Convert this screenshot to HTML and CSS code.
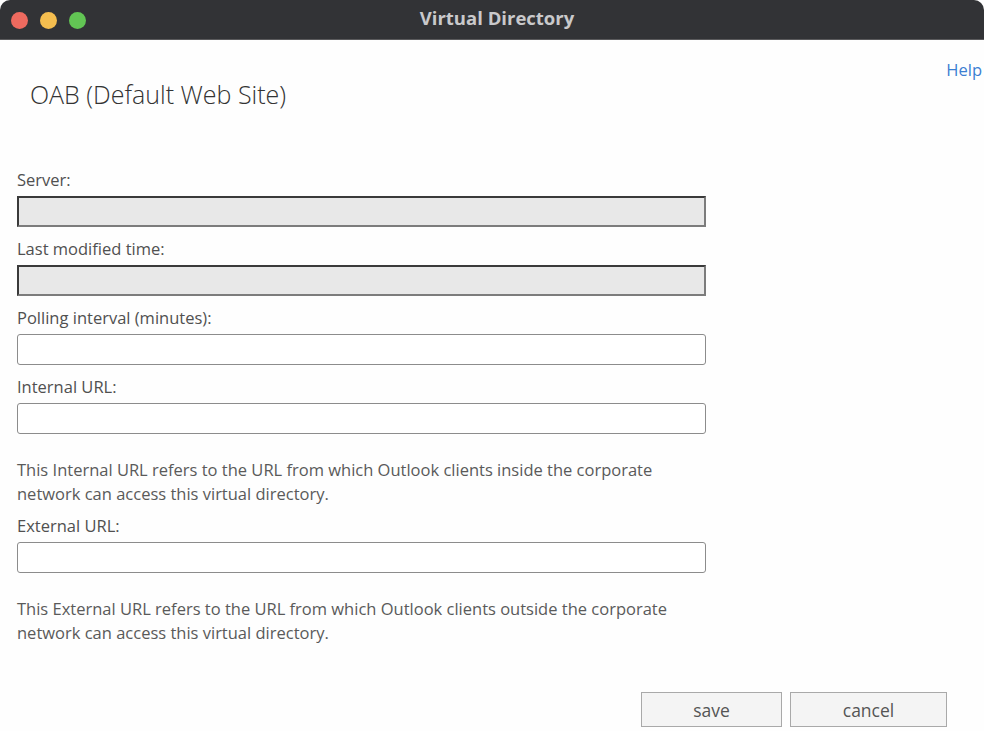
FILE: index.html
```html
<!DOCTYPE html>
<html>
<head>
<meta charset="utf-8">
<link rel="stylesheet" href="styles.css">
</head>
<body>
<div class="window">
  <div class="titlebar">
    <div class="lights">
      <span class="light red"></span>
      <span class="light yellow"></span>
      <span class="light green"></span>
    </div>
    <div class="title">Virtual Directory</div>
  </div>
  <div class="content">
    <div class="header">
      <h1 class="heading">OAB (Default Web Site)</h1>
      <a class="help">Help</a>
    </div>
    <div class="form">
      <div class="field">
        <label class="label">Server:</label>
        <div class="input readonly"></div>
      </div>
      <div class="field">
        <label class="label">Last modified time:</label>
        <div class="input readonly"></div>
      </div>
      <div class="field">
        <label class="label">Polling interval (minutes):</label>
        <div class="input"></div>
      </div>
      <div class="field">
        <label class="label">Internal URL:</label>
        <div class="input"></div>
      </div>
      <p class="note">This Internal URL refers to the URL from which Outlook clients inside the corporate network can access this virtual directory.</p>
      <div class="field">
        <label class="label">External URL:</label>
        <div class="input"></div>
      </div>
      <p class="note">This External URL refers to the URL from which Outlook clients outside the corporate network can access this virtual directory.</p>
    </div>
    <div class="actions">
      <button class="btn save">save</button>
      <button class="btn cancel">cancel</button>
    </div>
  </div>
</div>
</body>
</html>
```
FILE: styles.css
```css
html, body {
  margin: 0;
  padding: 0;
  background: #ffffff;
}
body {
  font-family: "Open Sans", "Noto Sans", sans-serif;
  color: #505050;
}
.window {
  width: 984px;
  height: 731px;
  display: flex;
  flex-direction: column;
  background: #fefefe;
  overflow: hidden;
}
.titlebar {
  height: 40px;
  flex: 0 0 40px;
  box-sizing: border-box;
  background: #323336;
  border-bottom: 1px solid #5a5a5c;
  border-radius: 10px 10px 0 0;
  display: flex;
  align-items: center;
  position: relative;
}
.lights {
  display: flex;
  gap: 12px;
  padding-left: 11px;
  margin-top: 1px;
}
.light {
  width: 17px;
  height: 17px;
  border-radius: 50%;
  display: block;
}
.red { background: #ee6a5f; }
.yellow { background: #f5be4f; }
.green { background: #62c554; }
.title {
  position: absolute;
  left: 10px;
  right: 0;
  top: 6px;
  text-align: center;
  font-family: "Open Sans", sans-serif;
  font-weight: 700;
  font-size: 18.5px;
  line-height: 24px;
  color: #c9c9cb;
  pointer-events: none;
}
.content {
  flex: 1;
  padding: 0 37px 0 17px;
  display: flex;
  flex-direction: column;
}
.header {
  display: flex;
  justify-content: space-between;
  align-items: flex-start;
  margin-right: -35px;
}
.heading {
  margin: 39px 0 0 13px;
  font-size: 25px;
  font-weight: 300;
  color: #333;
  line-height: 30px;
}
.help {
  margin-top: 19px;
  font-size: 16.5px;
  color: #3b7fd2;
  line-height: 22px;
}
.form {
  margin-top: 49px;
  width: 689px;
}
.field {
  display: flex;
  flex-direction: column;
}
.label {
  font-size: 16.5px;
  line-height: 22px;
  padding: 11px 0 5px;
  color: #505050;
}
.input {
  height: 31px;
  box-sizing: border-box;
  border: 1px solid #8c8c8c;
  border-radius: 3px;
  background: #fff;
}
.input.readonly {
  background: #e8e8e8;
  border-radius: 0;
  border-width: 2px;
  border-style: solid;
  border-color: #3a3a3a #7c7c7c #7c7c7c #3a3a3a;
}
.note {
  margin: 24px 0 -2px;
  font-size: 16.5px;
  line-height: 24px;
  color: #5a5a5a;
  width: 670px;
}
.actions {
  margin-top: auto;
  margin-bottom: 4px;
  display: flex;
  justify-content: flex-end;
  gap: 8px;
}
.btn {
  height: 35px;
  font-family: "Open Sans", sans-serif;
  font-size: 17.5px;
  color: #555;
  background: #f4f4f4;
  border: 1px solid #a9a9a9;
  border-radius: 0;
  padding: 0;
}
.save { width: 141px; }
.cancel { width: 157px; }
```
